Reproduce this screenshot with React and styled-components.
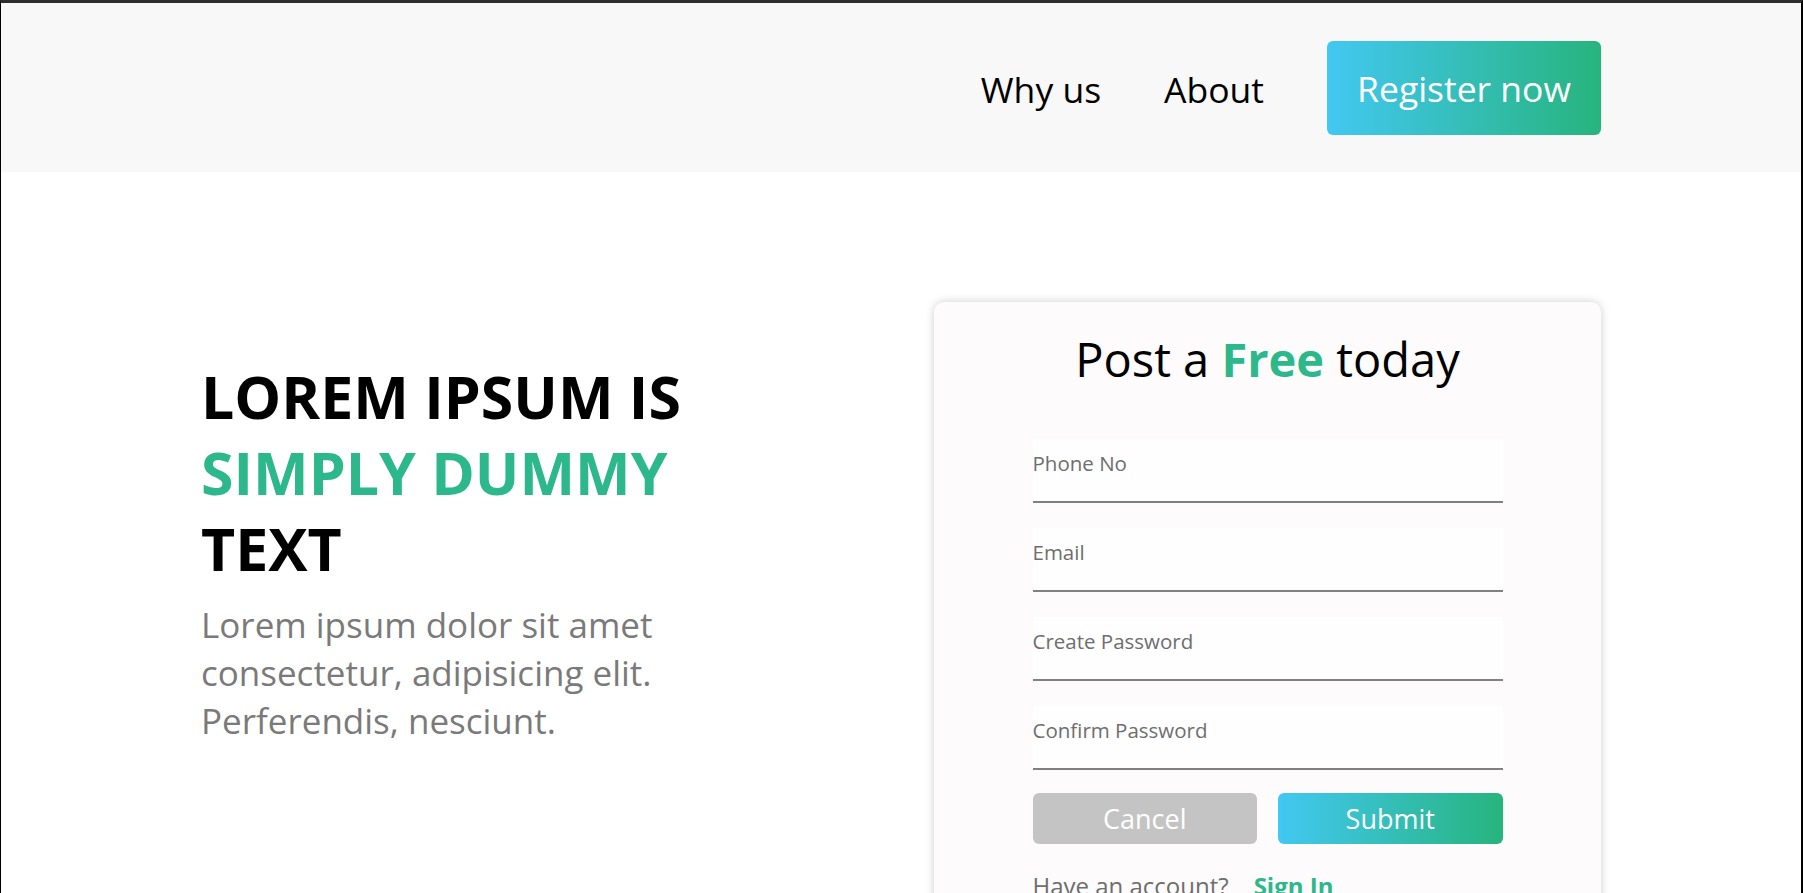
import React from "react";
import styled, { createGlobalStyle } from "styled-components";

const GlobalStyle = createGlobalStyle`
  html, body {
    margin: 0;
    padding: 0;
    background: #ffffff;
  }
  body {
    font-family: "Open Sans", "Noto Sans", "Liberation Sans", sans-serif;
  }
  * {
    box-sizing: border-box;
  }
`;

const Frame = styled.div`
  height: 100vh;
  overflow: hidden;
  border-top: 3px solid #2e2e2e;
  border-left: 1px solid #000;
  border-right: 2px solid #000;
  background: #fff;
`;

const Header = styled.header`
  height: 169px;
  background: #f8f8f8;
  display: flex;
  align-items: center;
`;

const Container = styled.div`
  width: 1400px;
  margin: 0 auto;
`;

const Nav = styled(Container)`
  display: flex;
  justify-content: flex-end;
  align-items: center;
  gap: 63px;
`;

const NavLink = styled.a`
  font-size: 35.5px;
  color: #000;
  text-decoration: none;
  margin-top: 2px;
`;

const GradientButton = styled.button`
  border: 0;
  outline: 0;
  cursor: pointer;
  color: #fff;
  font-family: inherit;
  background: ${(p) =>
    p.$muted ? "#c4c4c4" : "linear-gradient(90deg, #42c8f2 0%, #27b47d 100%)"};
`;

const RegisterButton = styled(GradientButton)`
  height: 94px;
  padding: 0 30px;
  border-radius: 6px;
  font-size: 35.5px;
`;

const Hero = styled(Container)`
  display: flex;
  justify-content: space-between;
  align-items: flex-start;
  margin-top: 130px;
`;

const Intro = styled.div`
  padding-top: 56px;
  width: 530px;
`;

const Title = styled.h1`
  margin: 0;
  font-size: 59px;
  line-height: 76px;
  font-weight: 700;
  color: #000;
  text-transform: uppercase;
`;

const Accent = styled.span`
  color: #2db88c;
  font-weight: 700;
`;

const Lead = styled.p`
  margin: 15px 0 0;
  font-size: 35px;
  line-height: 48px;
  color: #7a7a7a;
`;

const Card = styled.div`
  width: 667px;
  background: #fdfbfc;
  border-radius: 10px;
  box-shadow: 0 0 10px rgba(0, 0, 0, 0.2);
  padding: 28px 0 40px;
`;

const CardTitle = styled.h2`
  margin: 0;
  text-align: center;
  font-size: 47px;
  line-height: 58px;
  font-weight: 400;
  color: #000;
`;

const Form = styled.form`
  width: 470px;
  margin: 51px auto 0;
  display: flex;
  flex-direction: column;
  gap: 25px;
`;

const Input = styled.input`
  width: 100%;
  height: 64px;
  border: 0;
  border-bottom: 2px solid #808080;
  background: #fffeff;
  outline: 0;
  padding: 0 0 14px;
  font-family: inherit;
  font-size: 20.5px;
  color: #333;
  &::placeholder {
    color: #6e6e6e;
  }
`;

const Actions = styled.div`
  display: grid;
  grid-template-columns: 1fr 1fr;
  gap: 21px;
  margin-top: -2px;
`;

const FormButton = styled(GradientButton)`
  height: 51px;
  border-radius: 6px;
  font-size: 27px;
`;

const Footer = styled.p`
  margin: 0;
  font-size: 24px;
  color: #6e6e6e;
  display: flex;
  gap: 25px;
`;

const SignIn = styled.a`
  color: #2db88c;
  font-weight: 700;
  text-decoration: none;
`;

const fields = ["Phone No", "Email", "Create Password", "Confirm Password"];

export default function App() {
  return (
    <Frame>
      <GlobalStyle />
      <Header>
        <Nav>
          <NavLink href="#why">Why us</NavLink>
          <NavLink href="#about">About</NavLink>
          <RegisterButton type="button">Register now</RegisterButton>
        </Nav>
      </Header>
      <Hero>
        <Intro>
          <Title>
            Lorem ipsum is <Accent>simply dummy</Accent> text
          </Title>
          <Lead>
            Lorem ipsum dolor sit amet consectetur, adipisicing elit.
            Perferendis, nesciunt.
          </Lead>
        </Intro>
        <Card>
          <CardTitle>
            Post a <Accent>Free</Accent> today
          </CardTitle>
          <Form onSubmit={(e) => e.preventDefault()}>
            {fields.map((f) => (
              <Input key={f} placeholder={f} type={f.includes("Password") ? "password" : "text"} />
            ))}
            <Actions>
              <FormButton type="button" $muted>
                Cancel
              </FormButton>
              <FormButton type="submit">Submit</FormButton>
            </Actions>
            <Footer>
              Have an account? <SignIn href="#signin">Sign In</SignIn>
            </Footer>
          </Form>
        </Card>
      </Hero>
    </Frame>
  );
}
